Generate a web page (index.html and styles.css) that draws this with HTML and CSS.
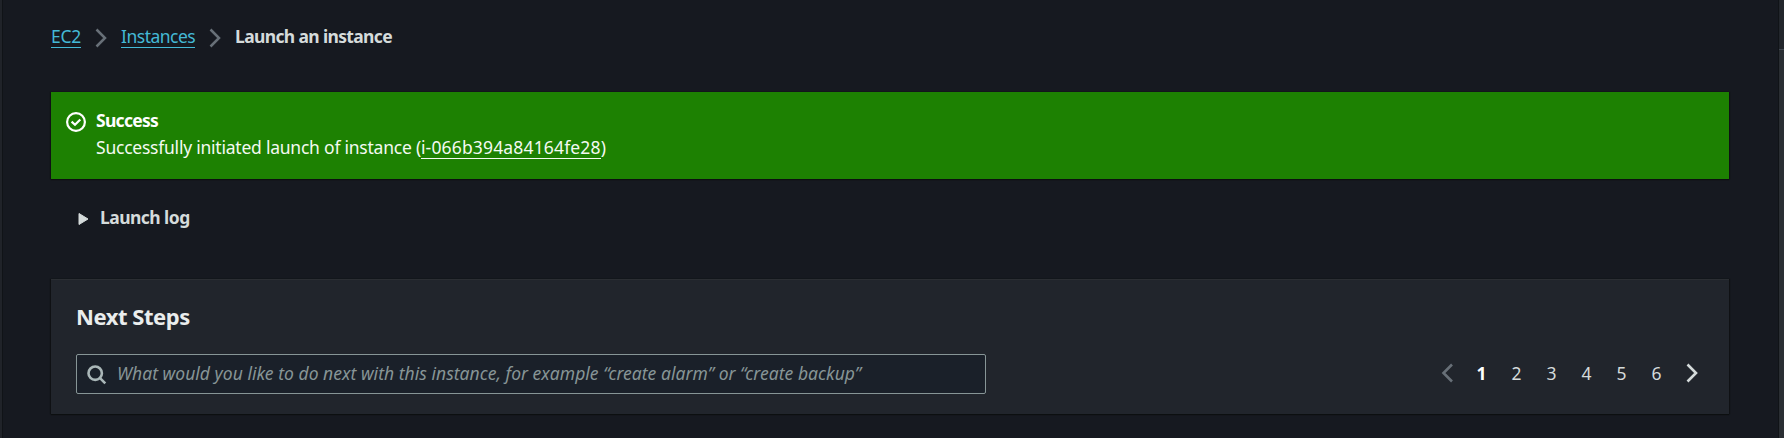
FILE: index.html
```html
<!DOCTYPE html>
<html lang="en">
<head>
<meta charset="utf-8">
<title>Launch an instance</title>
<link rel="stylesheet" href="styles.css">
</head>
<body>
<div class="shell">
  <main class="content">
    <nav class="breadcrumb">
      <a class="crumb crumb-ec2" href="#">EC2</a>
      <svg class="sep" width="13" height="20" viewBox="0 0 13 20"><path d="M1.500 1.500 10 10 1.500 18.500"/></svg>
      <a class="crumb crumb-instances" href="#">Instances</a>
      <svg class="sep" width="13" height="20" viewBox="0 0 13 20"><path d="M1.500 1.500 10 10 1.500 18.500"/></svg>
      <span class="current">Launch an instance</span>
    </nav>
    <section class="flash">
      <svg class="check" width="20" height="20" viewBox="0 0 20 20"><circle cx="10" cy="10" r="8.900"/><path d="M5.600 9.600 9 12.800 14.300 7.500"/></svg>
      <div class="flash-text">
        <div class="flash-title"><span>Success</span></div>
        <div class="flash-body"><span class="message">Successfully initiated launch of instance (</span><a class="instance" href="#">i-066b394a84164fe28</a>)</div>
      </div>
    </section>
    <div class="log">
      <svg width="11" height="14" viewBox="0 0 11 14"><path d="M1 1.500 10 7 1 12.500Z"/></svg>
      <span class="log-label">Launch log</span>
    </div>
    <section class="panel">
      <h2 class="panel-title">Next Steps</h2>
      <div class="tools">
        <div class="search">
          <svg width="20" height="20" viewBox="0 0 20 20"><circle cx="8.200" cy="8.200" r="6.700"/><path d="M12.800 12.800 18.300 18.300"/></svg>
          <span class="placeholder">What would you like to do next with this instance, for example “create alarm” or “create backup”</span>
        </div>
        <div class="pages">
          <svg class="arrow prev" width="13" height="20" viewBox="0 0 13 20"><path d="M11 1.500 2.500 10 11 18.500"/></svg>
          <span class="page active">1</span><span class="page">2</span><span class="page">3</span><span class="page">4</span><span class="page">5</span><span class="page">6</span>
          <svg class="arrow next" width="13" height="20" viewBox="0 0 13 20"><path d="M1.500 1.500 10 10 1.500 18.500"/></svg>
        </div>
      </div>
    </section>
  </main>
  <aside class="rail"></aside>
</div>
</body>
</html>
```
FILE: styles.css
```css
* { box-sizing: border-box; }
body {
  margin: 0;
  background: #161920;
  color: #d5dbdb;
  font-family: "Noto Sans", "Open Sans", sans-serif;
  font-size: 17.5px;
  line-height: 27px;
  white-space: nowrap;
}
svg { display: block; flex: none; fill: none; }
.shell { display: flex; height: 438px; overflow: hidden; }
.content {
  flex: 1;
  padding: 23px 50px 0 49px;
  border-left: 2px solid #202329;
  box-shadow: inset 1px 0 #101317, inset -1px 0 #101317;
}
.rail { width: 5px; background: #2a2e33; border-top: 49px solid #22262c; box-shadow: inset 0 1px #414850; }
.breadcrumb { display: flex; height: 25px; }
.crumb { color: #44b9d6; text-decoration: none; height: 25px; border-bottom: 1px solid #44b9d6; }
.crumb-ec2 { width: 30px; letter-spacing: -0.3px; }
.crumb-instances { width: 74px; letter-spacing: -0.5px; }
.sep { margin: 5px 13px 0 14px; stroke: #687078; stroke-width: 2.5; }
.current { font-weight: 700; letter-spacing: -0.65px; }
.flash {
  display: flex;
  gap: 10px;
  height: 87px;
  margin-top: 44px;
  padding: 15px 15px 0;
  background: #1d8102;
  color: #fff;
  box-shadow: 0 1px 1px #0c1010, 1px 0 1px #101316, -1px 0 1px #101316;
}
.check { margin-top: 5px; stroke: #fff; stroke-width: 2.2; }
.flash-title { font-weight: 700; letter-spacing: -0.7px; }
.message { letter-spacing: -0.23px; }
.flash-body { display: flex; color: #f4faf2; }
.instance { color: inherit; text-decoration: none; height: 25px; border-bottom: 1px solid; letter-spacing: 0.16px; }
.log { display: flex; align-items: center; gap: 11px; margin: 25px 0 0 27px; font-weight: 700; letter-spacing: -0.55px; }
.log svg { fill: #d5dbdb; stroke: #d5dbdb; stroke-width: 1; stroke-linejoin: round; margin-top: 2px; }
.panel {
  height: 135px;
  margin-top: 48px;
  padding: 21px 31px 0 25px;
  background: #21252c;
  border-top: 1px solid #2b2e33;
  box-shadow: 0 1px 1px #0c0f10, 1px 0 1px #101316, -1px 0 1px #101316;
}
.panel-title { margin: 0; color: #eaeded; font-size: 22px; line-height: 30px; font-weight: 700; letter-spacing: -0.45px; }
.tools { display: flex; justify-content: space-between; margin-top: 23px; }
.search { display: flex; width: 910px; height: 40px; padding: 10px; gap: 10px; border: 1px solid #879596; border-radius: 2px; background: #1a2029; }
.search svg { stroke: #aab7b8; stroke-width: 2.6; }
.placeholder { color: #879596; font-style: italic; line-height: 38px; margin-top: -11px; letter-spacing: 0.03px; }
.pages { display: flex; align-items: center; height: 38px; margin-right: -1px; }
.page { width: 35px; text-align: center; }
.active { color: #fff; font-weight: 700; }
.arrow { stroke-width: 2.6; }
.prev { stroke: #687078; margin-right: 10px; }
.next { stroke: #d5dbdb; margin-left: 12px; }
```
